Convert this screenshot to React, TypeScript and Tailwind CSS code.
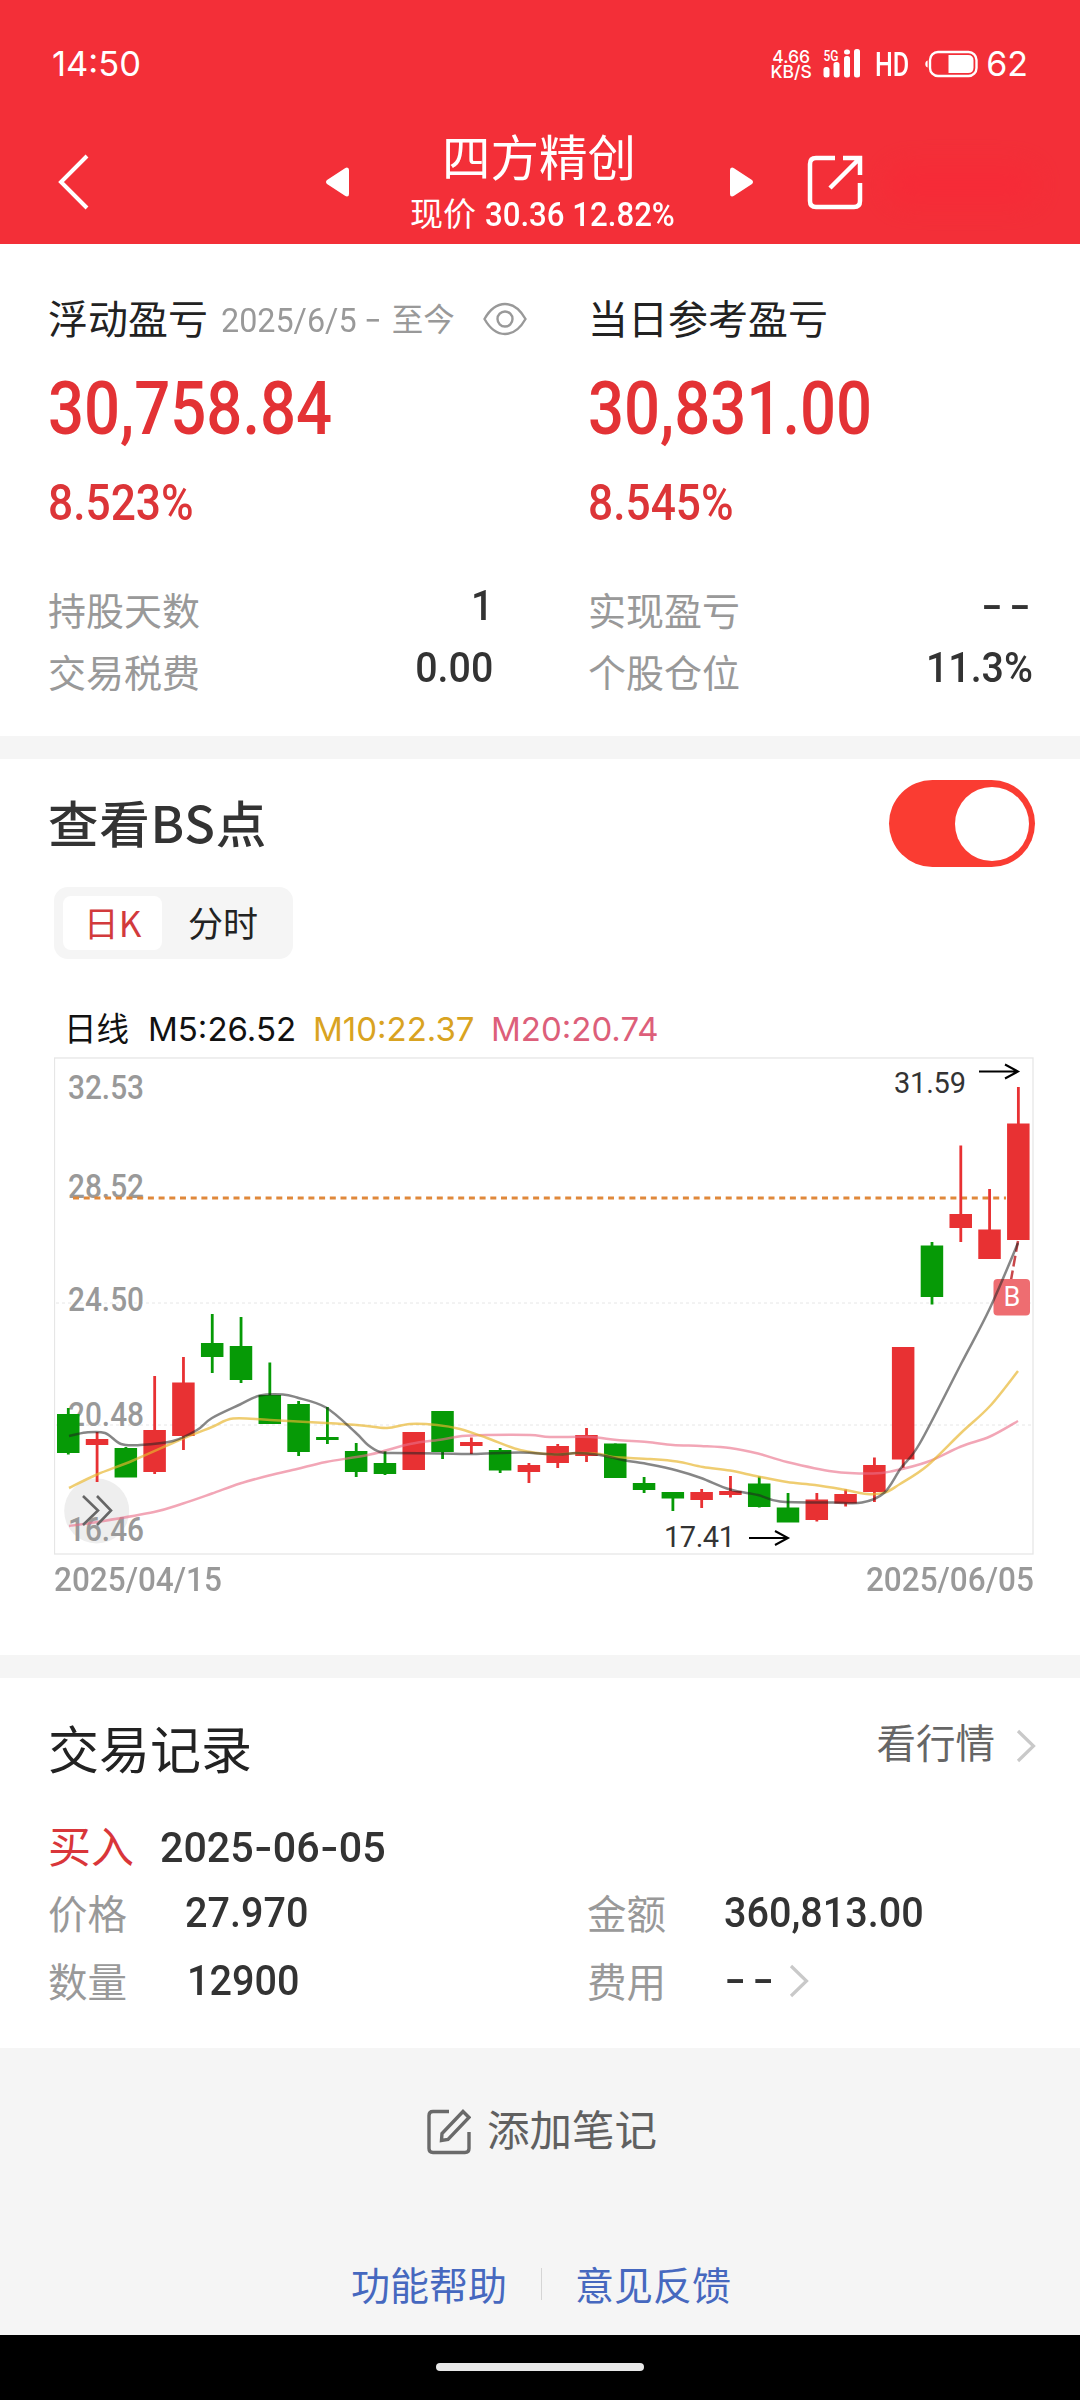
import { clsx } from "clsx";

const CJK = "whitespace-nowrap font-['Noto_Sans_CJK_SC',sans-serif]";
const ROBOTO = "font-[Roboto,'Noto_Sans_CJK_SC',sans-serif]";
const INTER = "font-[Inter,'Noto_Sans_CJK_SC',sans-serif]";

const UP = "#e83133";
const DOWN = "#069a06";

// [bodyTop, bodyBottom, high, low, up]
const candles: [number, number, number, number, boolean][] = [
  [1414, 1453, 1408, 1454.5, false],
  [1439, 1445, 1432, 1482, true],
  [1448, 1477.5, 1447, 1477, false],
  [1430, 1472, 1376, 1474, true],
  [1382.5, 1436, 1357, 1450, true],
  [1343, 1357, 1314, 1373, false],
  [1346, 1380, 1317, 1383, false],
  [1395, 1424, 1362.5, 1424, false],
  [1404, 1452, 1401, 1456, false],
  [1437, 1440, 1407, 1444, false],
  [1451, 1472, 1443, 1477, false],
  [1463, 1474, 1451, 1475, false],
  [1432, 1470, 1432, 1470, true],
  [1411, 1452, 1411, 1459, false],
  [1442, 1446, 1437.5, 1454, true],
  [1450, 1470.5, 1448, 1473, false],
  [1465, 1472, 1463, 1483, true],
  [1446, 1463, 1444, 1468, true],
  [1435, 1456, 1428, 1462, true],
  [1443.5, 1478, 1443.5, 1478, false],
  [1483, 1490, 1477, 1493, false],
  [1492, 1498.5, 1492, 1511, false],
  [1492, 1500, 1489, 1508, true],
  [1491, 1495, 1476, 1497.5, true],
  [1483.5, 1507, 1476.5, 1507.5, false],
  [1507.5, 1522.5, 1493, 1522, false],
  [1499.5, 1520, 1493, 1521.5, true],
  [1494, 1503.5, 1489.5, 1506.5, true],
  [1465, 1492, 1457.5, 1502, true],
  [1347, 1459.5, 1347, 1468, true],
  [1245.5, 1297, 1242, 1304.5, false],
  [1214, 1228, 1145.5, 1242, true],
  [1229.5, 1259, 1189, 1259, true],
  [1123.5, 1240, 1087, 1240, true],
];

const ma5 = [
  [69, 1436], [86, 1432.5], [105, 1433], [121, 1444], [140, 1445], [173, 1441], [197, 1430], [212, 1418],
  [240, 1404.5], [260, 1395.5], [283, 1394.5], [297, 1397.5], [326, 1407.5], [355, 1432], [368, 1445], [380, 1452],
  [393, 1453], [440, 1453.5], [473, 1454], [520, 1452.5], [557, 1454.5], [577, 1453], [600, 1455], [623, 1460],
  [650, 1464.5], [677, 1470.5], [701, 1478], [730, 1489.5], [758, 1495], [780, 1501.5], [833, 1502.5], [862, 1502.5],
  [884, 1493], [901, 1468], [920, 1443], [961, 1364], [990, 1308], [1018, 1243],
];

const ma10 = [
  [69, 1488], [97, 1474.5], [133, 1460.5], [183, 1438.5], [212, 1427], [233, 1418.5], [270, 1420], [326, 1423],
  [362, 1425.5], [387, 1428], [410, 1424], [437, 1425], [460, 1429], [487, 1438], [520, 1450], [553, 1454.5],
  [577, 1453], [600, 1454], [613, 1457], [650, 1459], [677, 1461.5], [703, 1467], [730, 1470.5], [758, 1476.5],
  [787, 1482], [815, 1485], [843, 1489.5], [867, 1494], [885, 1492.5], [900, 1484], [927, 1466], [961, 1433],
  [990, 1406], [1018, 1371],
];

const ma20 = [
  [69, 1526], [97, 1522], [154, 1512], [183, 1503.5], [212, 1493.5], [240, 1483.5], [269, 1475.5], [297, 1469],
  [326, 1462], [370, 1454.5], [410, 1444], [442, 1439.5], [462, 1436], [487, 1435], [530, 1435], [550, 1437],
  [590, 1437], [617, 1440], [647, 1442], [673, 1445], [701, 1446], [730, 1448], [758, 1453.5], [787, 1462],
  [833, 1471.5], [873, 1473.5], [893, 1471], [927, 1462], [961, 1446.5], [990, 1436.5], [1018, 1421],
];

const axis = [
  { label: "32.53", y: 1099 },
  { label: "28.52", y: 1198 },
  { label: "24.50", y: 1311 },
  { label: "20.48", y: 1426 },
  { label: "16.46", y: 1541 },
];

const candleX = (i: number) => 68 + i * 28.79;

// Catmull-Rom to bezier
function smooth(pts: number[][]) {
  let d = `M${pts[0][0]} ${pts[0][1]}`;
  for (let i = 0; i < pts.length - 1; i++) {
    const p0 = pts[i - 1] || pts[i];
    const p1 = pts[i];
    const p2 = pts[i + 1];
    const p3 = pts[i + 2] || p2;
    d += `C${p1[0] + (p2[0] - p0[0]) / 6} ${p1[1] + (p2[1] - p0[1]) / 6} ${p2[0] - (p3[0] - p1[0]) / 6} ${p2[1] - (p3[1] - p1[1]) / 6} ${p2[0]} ${p2[1]}`;
  }
  return d;
}

function Num({ children, className }: { children: React.ReactNode; className?: string }) {
  return (
    <span className={clsx("inline-block whitespace-nowrap leading-none font-medium", ROBOTO, className)}>
      {children}
    </span>
  );
}

function Chevron({ className }: { className?: string }) {
  return (
    <svg viewBox="0 0 20 34" className={clsx("w-5 h-[34px]", className)} fill="none" stroke="#c9c9c9" strokeWidth="3.2">
      <path d="M2 2l15.5 15L2 32" />
    </svg>
  );
}

function StatusBar() {
  return (
    <div className="flex h-32 items-center pl-[52px] pr-[52px]">
      <span className={clsx("text-[34.5px] leading-none", INTER)}>14:50</span>
      <div className="ml-auto flex items-center">
        <div className={clsx("flex w-10 flex-col items-center text-[17.5px] leading-[15.5px] font-medium", INTER)}>
          <span>4.66</span>
          <span>KB/S</span>
        </div>
        <svg viewBox="0 0 40 30" className="ml-3 h-[30px] w-10" fill="#fff">
          <text x="0.5" y="11.5" fontSize="14.5" textLength="15" lengthAdjust="spacingAndGlyphs" fontWeight="500" className="font-[Roboto]">5G</text>
          <rect x="0.5" y="18" width="6" height="10.5" rx="2.5" />
          <rect x="10.5" y="13" width="6" height="15.5" rx="2.5" />
          <rect x="21" y="7" width="6" height="21.5" rx="2.5" />
          <rect x="21" y="0.5" width="6" height="5" rx="2.5" />
          <rect x="31" y="0" width="6" height="28.5" rx="2.5" />
        </svg>
        <Num className="ml-3 w-[34px] origin-left scale-x-[0.74] text-[34px]">HD</Num>
        <svg viewBox="0 0 54 28" className="ml-4 h-7 w-[54px]">
          <path d="M2.6 10.5v7C1 17 .3 15.6.3 14S1 11 2.6 10.5z" fill="#fff" />
          <rect x="5" y="2" width="46.5" height="24" rx="8" fill="none" stroke="#fff" strokeWidth="2.4" />
          <path d="M23.5 5H43q5.5 0 5.5 5.5v7q0 5.5-5.5 5.5H23.5z" fill="#fff" />
        </svg>
        <span className={clsx("ml-[7px] text-[34px] leading-none", INTER)}>62</span>
      </div>
    </div>
  );
}

function Header() {
  return (
    <header className="h-[244px] bg-[#f32f38] text-white">
      <StatusBar />
      <div className="flex h-[116px] pl-14">
        <svg viewBox="0 0 34 56" className="mt-[26px] h-14 w-[34px]" fill="none" stroke="#fff" strokeWidth="4">
          <path d="M31 2L5 28l26 26" />
        </svg>
        <svg viewBox="0 0 24 32" className="ml-[235px] mt-[38px] h-8 w-6" fill="#fff">
          <path d="M22 1.5q2 0 2 2.5v24q0 2.5-2 2.5-1 0-2-.8L2 18q-2-2 0-4L20 2.3q1-.8 2-.8z" />
        </svg>
        <div className="ml-[55px] flex w-[270px] flex-col items-center">
          <h1 className={clsx("mt-0.5 text-[48.5px] leading-[50px]", CJK)}>四方精创</h1>
          <div className="mt-4 flex h-9 w-[262px] items-center pl-0.5">
            <span className={clsx("-mt-1 text-[33px] leading-9", CJK)}>现价</span>
            <Num className="ml-[9px] origin-left scale-x-[0.945] text-[33px]">30.36 12.82%</Num>
          </div>
        </div>
        <svg viewBox="0 0 24 32" className="ml-14 mt-[38px] h-8 w-6" fill="#fff">
          <path d="M2 1.5q-2 0-2 2.5v24q0 2.5 2 2.5 1 0 2-.8L22 18q2-2 0-4L4 2.3q-1-.8-2-.8z" />
        </svg>
        <svg viewBox="0 0 56 56" className="ml-[53px] mt-[26px] size-14" fill="none" stroke="#fff" strokeWidth="4.5">
          <path d="M28 4H9Q3 4 3 10v37q0 6 6 6h38q6 0 6-6V29" />
          <path d="M36 4h17v17M52 5L23 34" />
        </svg>
        <div className="ml-6 mt-[37px] h-10 w-[150px] rounded-full bg-[#fb2536] opacity-40 blur-md" />
      </div>
    </header>
  );
}

type StatRow = { label: string; value: string; dash?: boolean };

function StatColumn({ title, extra, amount, percent, rows }: {
  title: string;
  extra?: React.ReactNode;
  amount: string;
  percent: string;
  rows: StatRow[];
}) {
  return (
    <div className="w-[445px]">
      <div className="flex h-[60px] items-center">
        <h2 className={clsx("text-[40px] leading-[60px] text-[#222]", CJK)}>{title}</h2>
        {extra}
      </div>
      <div className="flex h-[120px] items-center pt-[3px] text-[#e33235]">
        <Num className="origin-left scale-x-[0.857] text-[74px]">{amount}</Num>
      </div>
      <div className="flex h-[72px] items-center pt-0.5 text-[#dc3538]">
        <Num className="origin-left scale-x-[0.895] text-[49.5px]">{percent}</Num>
      </div>
      <div className="mt-[39px]">
        {rows.map((r) => (
          <div key={r.label} className="flex h-[62px] items-center justify-between">
            <span className={clsx("text-[38px] leading-none text-[#999]", CJK)}>{r.label}</span>
            {r.dash ? (
              <span className={clsx("-mr-1 mb-[9px] origin-right scale-x-115 text-[42px] leading-none font-medium tracking-[5px] text-[#333]", INTER)}>{r.value}</span>
            ) : (
              <Num className="mb-[7px] origin-right scale-x-[0.915] text-[43px] text-[#333]">{r.value}</Num>
            )}
          </div>
        ))}
      </div>
    </div>
  );
}

function KChart() {
  return (
    <svg viewBox="54 1057 980 498" className="block h-[498px] w-[980px]">
      <rect x="54.5" y="1058" width="978.5" height="496" fill="none" stroke="#e6e6e6" strokeWidth="1.3" />
      <path d="M56 1303H1032M56 1425H1032" stroke="#e6e6e6" strokeDasharray="3 3" />
      <circle cx="96.7" cy="1511" r="32.5" fill="#eee" />
      {axis.map((a) => (
        <text key={a.label} x="68" y={a.y} fontSize="33.5" fontWeight="500" fill="#999" textLength="76" lengthAdjust="spacingAndGlyphs" className="font-[Roboto]">
          {a.label}
        </text>
      ))}
      <path d="M73 1198H1006" stroke="#e0883a" strokeWidth="3" strokeDasharray="6 4.7" />
      {candles.map(([top, bottom, high, low, up], i) => (
        <g key={i} fill={up ? UP : DOWN}>
          <rect x={candleX(i) - 1.1} y={high} width="2.8" height={low - high} />
          <rect x={candleX(i) - 11} y={top} width="22.5" height={bottom - top} />
        </g>
      ))}
      <path d="M1018 1241L1011 1280" stroke="#c8474a" strokeWidth="2.5" strokeDasharray="11 4" />
      <rect x="993.5" y="1279" width="36.5" height="36.5" rx="4" fill="#ee6d71" />
      <g fill="none" strokeWidth="2.5">
        <path d={smooth(ma20)} stroke="#ea7089" strokeOpacity="0.62" />
        <path d={smooth(ma10)} stroke="#e8b52e" strokeOpacity="0.68" />
        <path d={smooth(ma5)} stroke="#222" strokeOpacity="0.55" />
      </g>
      <text x="1012" y="1306" fontSize="27" fill="#fff" textAnchor="middle" className="font-[Roboto]">B</text>
      <path d="M83 1496l15 14.5-15 14.5M97 1496l14 14.5-14 14.5" fill="none" stroke="#666" strokeWidth="2.6" />
      <g fontSize="29" fill="#333" className="font-[Roboto]">
        <text x="894" y="1093" textLength="72">31.59</text>
        <text x="664" y="1547" textLength="71">17.41</text>
      </g>
      <path d="M979 1071.5H1017M1005 1064.5l13 7-13 7M749 1538H787M775 1531l13 7-13 7" fill="none" stroke="#000" strokeWidth="2" />
    </svg>
  );
}

function Record({ label, children, className }: { label: string; children: React.ReactNode; className?: string }) {
  return (
    <div className={clsx("flex h-[68px] items-center", className)}>
      <span className={clsx("mb-[3px] w-[137px] text-[39.5px] leading-none text-[#999]", CJK)}>{label}</span>
      {children}
    </div>
  );
}

export default function App() {
  return (
    <div className="flex h-[2400px] w-[1080px] flex-col overflow-hidden bg-[#f5f5f5]">
      <Header />

      <section className="flex h-[492px] gap-[95px] bg-white pl-12 pt-[43px]">
        <StatColumn
          title="浮动盈亏"
          extra={
            <>
              <Num className="ml-[13px] mt-[5px] w-[132px] shrink-0 origin-left scale-x-[0.95] text-[34px] font-normal text-[#999]">2025/6/5</Num>
              <span className={clsx("ml-[11px] mt-1 origin-left scale-x-120 text-[32px] leading-none text-[#999]", INTER)}>-</span>
              <span className={clsx("ml-[13px] mt-0.5 text-[31.5px] leading-none text-[#999]", CJK)}>至今</span>
              <svg viewBox="0 0 44 34" className="ml-7 mt-[3px] h-[34px] w-11 shrink-0" fill="none" stroke="#999" strokeWidth="2.4">
                <path d="M1.5 17Q10 2 22 2t20.5 15Q34 32 22 32T1.5 17z" />
                <circle cx="22" cy="17" r="7.5" />
              </svg>
            </>
          }
          amount="30,758.84"
          percent="8.523%"
          rows={[
            { label: "持股天数", value: "1" },
            { label: "交易税费", value: "0.00" },
          ]}
        />
        <StatColumn
          title="当日参考盈亏"
          amount="30,831.00"
          percent="8.545%"
          rows={[
            { label: "实现盈亏", value: "--", dash: true },
            { label: "个股仓位", value: "11.3%" },
          ]}
        />
      </section>

      {/* BS points */}
      <section className="mt-[23px] h-[896px] bg-white">
        <div className="flex items-start justify-between pl-12 pr-[45px] pt-[21px]">
          <h2 className={clsx("text-[50.5px] leading-[82px] font-medium tracking-[0.8px] text-[#333]", CJK)}>查看BS点</h2>
          <button className="flex h-[87px] w-[146px] items-center justify-end rounded-full bg-[#fa3c32] pr-1.5">
            <span className="size-[74px] rounded-full bg-white" />
          </button>
        </div>
        <div className={clsx("ml-[54px] mt-5 flex h-[72px] w-[239px] items-center rounded-[14px] bg-[#f5f5f5] pl-[9px] text-[35px] leading-none", CJK)}>
          <span className="flex h-[54px] w-[99px] items-center justify-center rounded-lg bg-white pb-1 text-[#d23a3c]">日K</span>
          <span className="ml-[26px] pb-1 text-[#222]">分时</span>
        </div>
        <div className={clsx("ml-16 mt-[52px] flex h-9 items-center text-[33px] leading-none", INTER)}>
          <span className={clsx("mb-1 w-[84px] text-[32.5px] text-[#111]", CJK)}>日线</span>
          <span className="w-[165px] text-[#111]">M5:26.52</span>
          <span className="w-[178px] text-[#d9a321]">M10:22.37</span>
          <span className="text-[#dd5f7a]">M20:20.74</span>
        </div>
        <div className="ml-[54px] mt-[10px] w-[980px]">
          <KChart />
          <div className="mt-2 flex justify-between text-[#999]">
            <Num className="origin-left scale-x-[0.955] text-[33px]">2025/04/15</Num>
            <Num className="origin-right scale-x-[0.955] text-[33px]">2025/06/05</Num>
          </div>
        </div>
      </section>

      {/* Trade records */}
      <section className="mt-[23px] h-[370px] bg-white pl-12 pt-[38px]">
        <div className="flex h-[66px] items-center justify-between pr-11">
          <h2 className={clsx("mb-[3px] text-[51px] leading-none text-[#222]", CJK)}>交易记录</h2>
          <div className="mb-3 flex items-center">
            <span className={clsx("mb-1 text-[39.5px] leading-none text-[#666]", CJK)}>看行情</span>
            <Chevron className="ml-[21px] mt-1.5" />
          </div>
        </div>
        <div className="mt-[31px] flex h-[66px] items-center">
          <span className={clsx("mb-1 w-[112px] text-[43px] leading-none text-[#d9363a]", CJK)}>买入</span>
          <Num className="mt-1 origin-left scale-x-[0.97] text-[42.5px] text-[#333]">
            2025<span className={INTER}>-</span>06<span className={INTER}>-</span>05
          </Num>
        </div>
        <div className="grid grid-cols-[539px_1fr]">
          <Record label="价格">
            <Num className="mb-0.5 origin-left scale-x-[0.92] text-[43px] text-[#333]">27.970</Num>
          </Record>
          <Record label="金额">
            <Num className="mb-0.5 origin-left scale-x-[0.92] text-[43px] text-[#333]">360,813.00</Num>
          </Record>
          <Record label="数量">
            <Num className="mb-0.5 ml-0.5 origin-left scale-x-[0.92] text-[43px] text-[#333]">12900</Num>
          </Record>
          <Record label="费用">
            <span className={clsx("mb-1 mr-1 origin-left scale-x-115 text-[42px] leading-none font-medium tracking-[5px] text-[#333]", INTER)}>--</span>
            <Chevron className="ml-3" />
          </Record>
        </div>
      </section>

      <div className="flex h-[164px] items-center justify-center pl-1 text-[#606060]">
        <svg viewBox="0 0 44 46" className="mt-1 h-[46px] w-11" fill="none" stroke="#6a6a6a" strokeWidth="3.4">
          <path d="M22 2.5H6Q2 2.5 2 6.5v33q0 4 4 4h32q4 0 4-4V23" />
          <path d="M36 2.5l6 6L21 30.5l-6.5 1 .5-7z" />
        </svg>
        <span className={clsx("mb-[3px] ml-4 text-[42.5px] leading-none", CJK)}>添加笔记</span>
      </div>
      <div className={clsx("flex h-[123px] justify-center pl-0.5 pt-[51px] text-[39px] leading-[40px] text-[#4668bf]", CJK)}>
        <span>功能帮助</span>
        <span className="ml-[34px] mr-[33px] mt-[5px] h-8 w-px bg-[#d5d5d5]" />
        <span>意见反馈</span>
      </div>

      <div className="flex h-[65px] justify-center bg-black pt-7">
        <div className="h-2 w-[208px] rounded-full bg-[#e8e8e8]" />
      </div>
    </div>
  );
}
